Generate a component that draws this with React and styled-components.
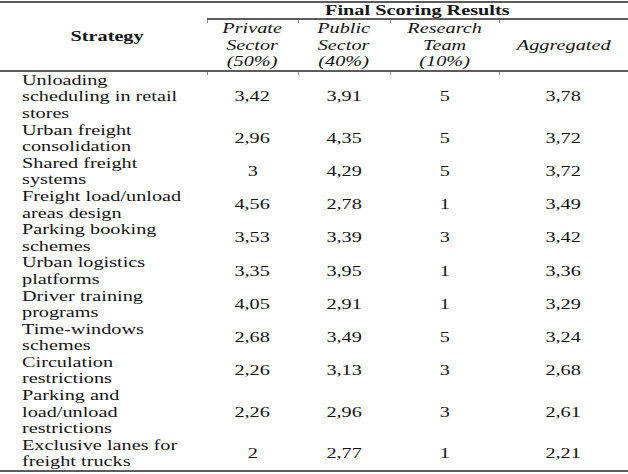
import React from "react";
import styled, { createGlobalStyle } from "styled-components";

const GlobalStyle = createGlobalStyle`
  html, body {
    margin: 0;
    padding: 0;
    background: #fff;
  }
  body {
    font-family: "Liberation Serif", "Times New Roman", serif;
    color: #141414;
  }
`;

const RULE = "2px solid #5c5c5c";

const Table = styled.div`
  width: 628px;
  margin-top: 1px;
  display: grid;
  grid-template-columns: 207px 91px 92px 109px 129px;
  border-top: ${RULE};
  border-bottom: ${RULE};
  font-size: 15px;
  line-height: 16.6px;
`;

// the source picture is stretched sideways, so every text run is widened
const Wide = styled.span`
  display: inline-block;
  white-space: nowrap;
  transform: scaleX(1.35);
  transform-origin: ${(p) => p.$origin || "center"};
`;

const StrategyHead = styled.div`
  grid-column: 1;
  grid-row: 1 / span 2;
  display: flex;
  align-items: center;
  justify-content: center;
  padding-left: 8px;
  font-weight: bold;
  border-bottom: ${RULE};
`;

const GroupHead = styled.div`
  grid-column: 2 / span 4;
  grid-row: 1;
  height: 15px;
  display: flex;
  align-items: center;
  justify-content: center;
  font-weight: bold;
  line-height: 15px;
  border-bottom: ${RULE};
`;

const SubHead = styled.div`
  position: relative;
  grid-row: 2;
  display: flex;
  align-items: center;
  justify-content: center;
  text-align: center;
  font-style: italic;
  border-bottom: ${RULE};

  &::before,
  &::after {
    content: "";
    position: absolute;
    left: 0;
    width: 1px;
    height: 3px;
    background: #8a8a8a;
  }
  &::before {
    top: 0;
  }
  &::after {
    bottom: -5px;
  }
`;

const Name = styled.div`
  grid-column: 1;
  padding-left: 22px;
`;

const Value = styled.div`
  display: flex;
  align-items: center;
  justify-content: center;
`;

const heads = [
  ["Private", "Sector", "(50%)"],
  ["Public", "Sector", "(40%)"],
  ["Research", "Team", "(10%)"],
  ["Aggregated"],
];

const rows = [
  [["Unloading", "scheduling in retail", "stores"], "3,42", "3,91", "5", "3,78"],
  [["Urban freight", "consolidation"], "2,96", "4,35", "5", "3,72"],
  [["Shared freight", "systems"], "3", "4,29", "5", "3,72"],
  [["Freight load/unload", "areas design"], "4,56", "2,78", "1", "3,49"],
  [["Parking booking", "schemes"], "3,53", "3,39", "3", "3,42"],
  [["Urban logistics", "platforms"], "3,35", "3,95", "1", "3,36"],
  [["Driver training", "programs"], "4,05", "2,91", "1", "3,29"],
  [["Time-windows", "schemes"], "2,68", "3,49", "5", "3,24"],
  [["Circulation", "restrictions"], "2,26", "3,13", "3", "2,68"],
  [["Parking and", "load/unload", "restrictions"], "2,26", "2,96", "3", "2,61"],
  [["Exclusive lanes for", "freight trucks"], "2", "2,77", "1", "2,21"],
];

const Lines = ({ lines, origin }) => (
  <Wide $origin={origin}>
    {lines.map((l, i) => (
      <React.Fragment key={i}>
        {i > 0 && <br />}
        {l}
      </React.Fragment>
    ))}
  </Wide>
);

export default function App() {
  return (
    <>
      <GlobalStyle />
      <Table>
        <StrategyHead>
          <Wide>Strategy</Wide>
        </StrategyHead>
        <GroupHead>
          <Wide>Final Scoring Results</Wide>
        </GroupHead>
        {heads.map((h, i) => (
          <SubHead key={i}>
            <Lines lines={h} />
          </SubHead>
        ))}

        {rows.map(([name, ...vals], r) => (
          <React.Fragment key={r}>
            <Name>
              <Lines lines={name} origin="left" />
            </Name>
            {vals.map((v, c) => (
              <Value key={c}>
                <Wide>{v}</Wide>
              </Value>
            ))}
          </React.Fragment>
        ))}
      </Table>
    </>
  );
}
